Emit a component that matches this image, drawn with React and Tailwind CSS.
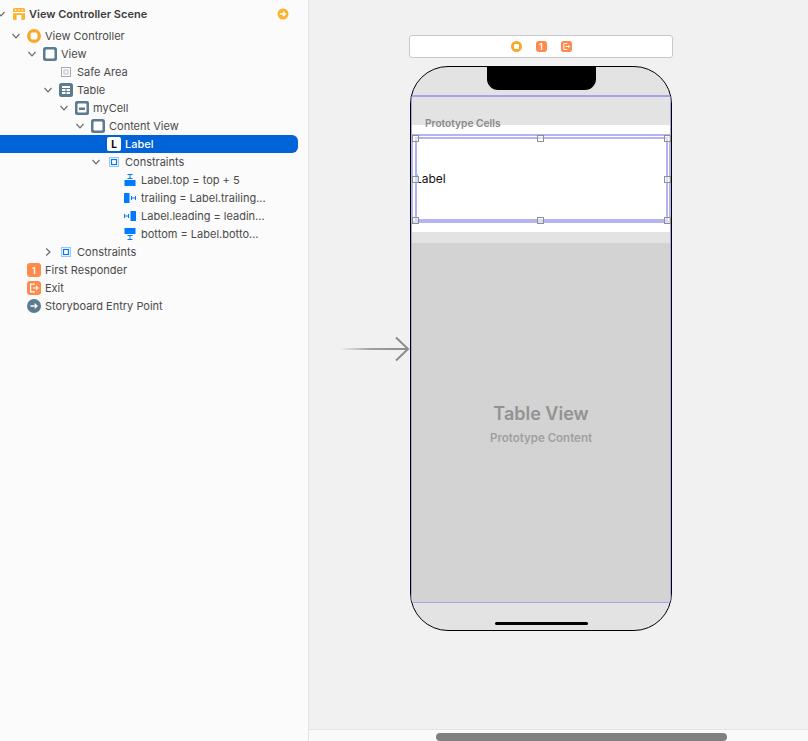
const SLATE = '#5b7b90'
const ORANGE = '#ff8a4c'
const BLUE = '#007aff'

const SceneIcon = () => (
  <svg width="14" height="14" viewBox="0 0 14 14">
    <rect x="1" y="1" width="12" height="12" rx="1.5" fill="#fdb32d" />
    <rect x="3" y="2.4" width="1.4" height="1.4" fill="#fff" />
    <rect x="6.3" y="2.4" width="1.4" height="1.4" fill="#fff" />
    <rect x="9.6" y="2.4" width="1.4" height="1.4" fill="#fff" />
    <rect x="1" y="5" width="12" height="1.2" fill="#fff" />
    <rect x="4.6" y="8" width="4.8" height="5" fill="#fff" />
  </svg>
)

const ControllerIcon = () => (
  <svg width="14" height="14" viewBox="0 0 14 14">
    <circle cx="7" cy="7" r="7" fill="#fba82a" />
    <rect x="3.6" y="3.6" width="6.8" height="6.8" rx="1.6" fill="#fff" />
  </svg>
)

const ViewIcon = () => (
  <svg width="14" height="14" viewBox="0 0 14 14">
    <rect width="14" height="14" rx="2.5" fill={SLATE} />
    <rect x="2.5" y="2.5" width="9" height="9" rx="1.2" fill="#fff" />
  </svg>
)

const SafeAreaIcon = () => (
  <svg width="14" height="14" viewBox="0 0 14 14" fill="none">
    <rect x="2.5" y="2.5" width="9" height="9" stroke="#a9a9a9" />
    <rect x="5" y="5" width="4" height="4" fill="#f4f4f4" stroke="#c4c4c4" />
  </svg>
)

const TableIcon = () => (
  <svg width="14" height="14" viewBox="0 0 14 14">
    <rect width="14" height="14" rx="2.5" fill={SLATE} />
    <path d="M3 3h8v2H3zM3 6h3.5v2H3zM7.5 6H11v2H7.5zM3 9h3.5v2H3zM7.5 9H11v2H7.5z" fill="#fff" />
  </svg>
)

const CellIcon = () => (
  <svg width="14" height="14" viewBox="0 0 14 14">
    <rect width="14" height="14" rx="2" fill={SLATE} />
    <rect x="2.5" y="2.5" width="9" height="9" rx="1" fill="#fff" />
    <rect x="4" y="6.5" width="6" height="2.5" fill={SLATE} />
  </svg>
)

const LabelIcon = () => (
  <div className="flex h-[14px] w-[14px] items-center justify-center rounded-[2px] bg-white text-[10px] leading-none font-bold text-black">
    L
  </div>
)

const ConstraintsIcon = () => (
  <svg width="14" height="14" viewBox="0 0 14 14" fill="none">
    <rect x="2.5" y="2.5" width="9" height="9" stroke="#3f8fe8" strokeDasharray="1 1" />
    <rect x="4.5" y="4.5" width="5" height="5" stroke={BLUE} strokeWidth="1.2" fill="#fff" />
  </svg>
)

const TopIcon = () => (
  <svg width="14" height="14" viewBox="0 0 14 14" fill="none">
    <path d="M4.5 1.5h5M4.5 5.5h5M7 1.5v4" stroke={BLUE} />
    <rect x="1.5" y="7" width="11" height="6" fill={BLUE} />
  </svg>
)

const TrailingIcon = () => (
  <svg width="14" height="14" viewBox="0 0 14 14" fill="none">
    <rect x="1" y="2" width="5.5" height="10" rx="0.5" fill={BLUE} />
    <path d="M8.5 5v4M12.5 5v4M8.5 7h4" stroke={BLUE} />
  </svg>
)

const LeadingIcon = () => (
  <svg width="14" height="14" viewBox="0 0 14 14" fill="none">
    <path d="M1.5 5v4M5.5 5v4M1.5 7h4" stroke={BLUE} />
    <rect x="7.5" y="2" width="5.5" height="10" rx="0.5" fill={BLUE} />
  </svg>
)

const BottomIcon = () => (
  <svg width="14" height="14" viewBox="0 0 14 14" fill="none">
    <rect x="1.5" y="1" width="11" height="6" fill={BLUE} />
    <path d="M4.5 8.5h5M4.5 12.5h5M7 8.5v4" stroke={BLUE} />
  </svg>
)

const ResponderIcon = ({ size = 14 }) => (
  <div
    className="flex items-center justify-center rounded-[3px] bg-[#ff8a4c] text-[9px] leading-none font-semibold text-white"
    style={{ width: size, height: size }}
  >
    1
  </div>
)

const ExitIcon = ({ size = 14 }) => (
  <svg width={size} height={size} viewBox="0 0 14 14" fill="none">
    <rect width="14" height="14" rx="3" fill={ORANGE} />
    <path d="M8 3.2H3.6v7.6H8" stroke="#fff" strokeWidth="1.2" />
    <path d="M5.8 7h5M9 5l2 2-2 2" stroke="#fff" strokeWidth="1.2" />
  </svg>
)

const EntryIcon = () => (
  <svg width="14" height="14" viewBox="0 0 14 14" fill="none">
    <circle cx="7" cy="7" r="7" fill={SLATE} />
    <path d="M3.5 7h6.5M7.6 4.6 10 7 7.6 9.4" stroke="#fff" strokeWidth="1.3" />
  </svg>
)

const ChevronDown = () => (
  <svg width="10" height="10" viewBox="0 0 10 10" fill="none">
    <path d="M1.5 3 5 6.8 8.5 3" stroke="#6b6b6b" strokeWidth="1.2" />
  </svg>
)

const ChevronRight = () => (
  <svg width="10" height="10" viewBox="0 0 10 10" fill="none">
    <path d="M3.2 1.5 7 5 3.2 8.5" stroke="#6b6b6b" strokeWidth="1.2" />
  </svg>
)

const rows = [
  { level: 0, open: true, icon: <ControllerIcon />, text: 'View Controller' },
  { level: 1, open: true, icon: <ViewIcon />, text: 'View' },
  { level: 2, icon: <SafeAreaIcon />, text: 'Safe Area' },
  { level: 2, open: true, icon: <TableIcon />, text: 'Table' },
  { level: 3, open: true, icon: <CellIcon />, text: 'myCell' },
  { level: 4, open: true, icon: <ViewIcon />, text: 'Content View' },
  { level: 5, selected: true, icon: <LabelIcon />, text: 'Label' },
  { level: 5, open: true, icon: <ConstraintsIcon />, text: 'Constraints' },
  { level: 6, icon: <TopIcon />, text: 'Label.top = top + 5' },
  { level: 6, icon: <TrailingIcon />, text: 'trailing = Label.trailing...' },
  { level: 6, icon: <LeadingIcon />, text: 'Label.leading = leadin...' },
  { level: 6, icon: <BottomIcon />, text: 'bottom = Label.botto...' },
  { level: 2, closed: true, icon: <ConstraintsIcon />, text: 'Constraints' },
  { level: 0, icon: <ResponderIcon />, text: 'First Responder' },
  { level: 0, icon: <ExitIcon />, text: 'Exit' },
  { level: 0, icon: <EntryIcon />, text: 'Storyboard Entry Point' },
]

function Row({ level, open, closed, selected, icon, text }) {
  return (
    <div className={`flex h-[18px] w-[298px] items-center rounded-r-[6px] ${selected ? 'bg-[#0063d8] font-medium text-white' : 'text-[#4a4a4a]'}`}>
      {/* chevron sits 11px left of the icon's edge */}
      <div className="flex w-[10px] shrink-0 justify-center" style={{ marginLeft: 11 + level * 16 }}>
        {open && <ChevronDown />}
        {closed && <ChevronRight />}
      </div>
      <div className="ml-[6px] shrink-0">{icon}</div>
      <span className="ml-[4px] whitespace-nowrap">{text}</span>
    </div>
  )
}

const Handle = ({ className }) => (
  <div className={`absolute h-[7px] w-[7px] border border-[#909090] bg-white/50 ${className}`} />
)

export default function App() {
  return (
    <div className="flex h-[741px] w-[808px] overflow-hidden bg-[#f1f1f1] font-['Inter','Liberation_Sans',sans-serif] text-[11px] leading-none">
      {/* Document outline */}
      <div className="w-[309px] shrink-0 overflow-hidden border-r border-[#e4e4e4] bg-[#fbfbfb] pt-[5px]">
        <div className="mb-[4px] flex h-[18px] w-[298px] items-center">
          <div className="ml-[-4px] flex w-[10px] shrink-0 justify-center">
            <ChevronDown />
          </div>
          <div className="ml-[6px] shrink-0">
            <SceneIcon />
          </div>
          <span className="ml-[3px] font-semibold text-[#3d3d3d]">View Controller Scene</span>
          <svg className="ml-auto mr-[9px]" width="12" height="12" viewBox="0 0 12 12" fill="none">
            <circle cx="6" cy="6" r="5.5" fill="#fdb32d" />
            <path d="M2.8 6h5M6 3.8 8.4 6 6 8.2" stroke="#fff" strokeWidth="1.3" />
          </svg>
        </div>
        {rows.map((r, i) => (
          <Row key={i} {...r} />
        ))}
      </div>

      {/* Canvas */}
      <div className="flex flex-1 flex-col">
        <div className="flex-1 pl-[31px] pt-[35px]">
          <div className="ml-[69px] flex h-[23px] w-[264px] items-center justify-center gap-[14px] rounded-[3px] border border-[#c9c9c9] bg-white">
            <svg width="11" height="11" viewBox="0 0 11 11">
              <circle cx="5.5" cy="5.5" r="5.5" fill="#fba82a" />
              <rect x="3" y="3" width="5" height="5" rx="1.2" fill="#fff" />
            </svg>
            <ResponderIcon size={11} />
            <ExitIcon size={11} />
          </div>

          <div className="mt-[8px] flex items-center">
            {/* Entry point arrow */}
            <svg className="shrink-0" width="70" height="31" viewBox="0 0 70 31" fill="none">
              <defs>
                <linearGradient id="tail" x1="0" x2="1" y1="0" y2="0">
                  <stop offset="0" stopColor="#8c8c8c" stopOpacity="0" />
                  <stop offset="0.45" stopColor="#8c8c8c" stopOpacity="0.8" />
                  <stop offset="1" stopColor="#8c8c8c" />
                </linearGradient>
              </defs>
              <rect x="0" y="15" width="68" height="2" fill="url(#tail)" />
              <path d="M56 4.5 68 16 56 27.5" stroke="#8c8c8c" strokeWidth="2" />
            </svg>

            {/* Device */}
            <div className="relative flex h-[565px] w-[262px] shrink-0 flex-col overflow-hidden rounded-[38px] border border-black bg-[#e3e3e3]">
              <div className="absolute left-[76px] top-[-1px] h-[24px] w-[109px] rounded-b-[11px] bg-black" />
              <div className="h-[58px] shrink-0" />
              <div className="relative h-[107px] shrink-0 bg-white">
                <span className="absolute left-[4px] top-[46px] text-[12px] leading-[16px] text-[#111]">Label</span>
              </div>
              <div className="h-[11px] shrink-0" />
              <div className="flex h-[359px] shrink-0 flex-col items-center justify-center bg-[#d3d3d3] pt-[2px]">
                <span className="text-[18px] leading-[22px] font-semibold text-[#929292]">Table View</span>
                <span className="mt-[6px] text-[11.5px] leading-[14px] font-semibold text-[#a0a0a0]">Prototype Content</span>
              </div>
              <div className="flex flex-1 items-end justify-center pb-[5px]">
                <div className="h-[3px] w-[93px] rounded-full bg-black" />
              </div>

              {/* Overlays: section title, constraint outlines, selection handles */}
              <span className="absolute left-[14px] top-[50px] text-[10.2px] leading-[12px] font-semibold text-[#8a8a8a]">Prototype Cells</span>
              <div className="absolute left-0 right-0 top-[28px] h-[508px] border border-t-2 border-[#a3a3e8]" />
              <div className="absolute left-0 right-0 top-[67px] h-[89px] border-2 border-[#b4b4f0]" />
              <div className="absolute left-[4px] right-[3px] top-[70px] h-[84px] border-2 border-[#b4b4f0]" />
              <Handle className="left-[1px] top-[68px]" />
              <Handle className="left-[126px] top-[68px]" />
              <Handle className="right-0 top-[68px]" />
              <Handle className="left-[1px] top-[109px]" />
              <Handle className="right-0 top-[109px]" />
              <Handle className="left-[1px] top-[150px]" />
              <Handle className="left-[126px] top-[150px]" />
              <Handle className="right-0 top-[150px]" />
            </div>
          </div>
        </div>

        {/* Horizontal scroller */}
        <div className="flex h-[12px] shrink-0 items-end border-t border-[#e4e4e4] bg-[#fafafa] pl-[127px]">
          <div className="h-[8px] w-[291px] rounded-full bg-[#808080]" />
        </div>
      </div>
    </div>
  )
}
